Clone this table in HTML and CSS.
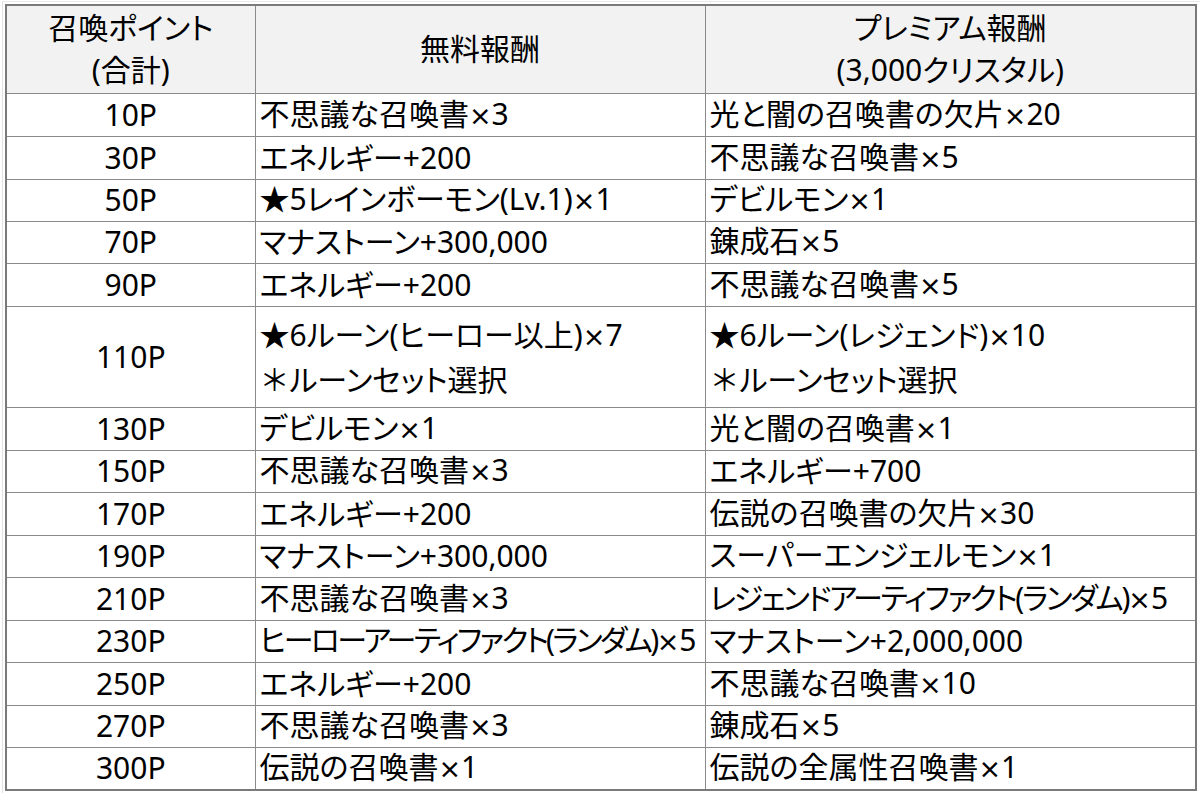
FILE: index.html
```html
<!DOCTYPE html>
<html lang="ja">
<head>
<meta charset="utf-8">
<title>召喚ポイント報酬</title>
<link rel="stylesheet" href="styles.css">
</head>
<body>
<div class="frame">
<table class="rewards">
  <colgroup>
    <col class="c-pt">
    <col class="c-free">
    <col class="c-prem">
  </colgroup>
  <thead>
    <tr class="head">
      <th>召喚ポイント<br>(合計)</th>
      <th>無料報酬</th>
      <th>プレミアム報酬<br>(3,000クリスタル)</th>
    </tr>
  </thead>
  <tbody>
    <tr class="r43"><td class="pt">10P</td><td>不思議な召喚書<span class="x">×</span>3</td><td>光と闇の召喚書の欠片<span class="x">×</span>20</td></tr>
    <tr class="r43"><td class="pt">30P</td><td>エネルギー+200</td><td>不思議な召喚書<span class="x">×</span>5</td></tr>
    <tr class="r42"><td class="pt">50P</td><td>★5レインボーモン(Lv.1)<span class="x">×</span>1</td><td>デビルモン<span class="x">×</span>1</td></tr>
    <tr class="r42"><td class="pt">70P</td><td>マナストーン+300,000</td><td>錬成石<span class="x">×</span>5</td></tr>
    <tr class="r43"><td class="pt">90P</td><td>エネルギー+200</td><td>不思議な召喚書<span class="x">×</span>5</td></tr>
    <tr class="r101"><td class="pt">110P</td><td>★6ルーン(ヒーロー以上)<span class="x">×</span>7<br><span class="mark">＊</span>ルーンセット選択</td><td>★6ルーン(レジェンド)<span class="x">×</span>10<br><span class="mark">＊</span>ルーンセット選択</td></tr>
    <tr class="r43"><td class="pt">130P</td><td>デビルモン<span class="x">×</span>1</td><td>光と闇の召喚書<span class="x">×</span>1</td></tr>
    <tr class="r42"><td class="pt">150P</td><td>不思議な召喚書<span class="x">×</span>3</td><td>エネルギー+700</td></tr>
    <tr class="r43"><td class="pt">170P</td><td>エネルギー+200</td><td>伝説の召喚書の欠片<span class="x">×</span>30</td></tr>
    <tr class="r42"><td class="pt">190P</td><td>マナストーン+300,000</td><td>スーパーエンジェルモン<span class="x">×</span>1</td></tr>
    <tr class="r43"><td class="pt">210P</td><td>不思議な召喚書<span class="x">×</span>3</td><td class="long">レジェンドアーティファクト(ランダム)<span class="x">×</span>5</td></tr>
    <tr class="r42"><td class="pt">230P</td><td class="long longer">ヒーローアーティファクト(ランダム)<span class="x">×</span>5</td><td>マナストーン+2,000,000</td></tr>
    <tr class="r43"><td class="pt">250P</td><td>エネルギー+200</td><td>不思議な召喚書<span class="x">×</span>10</td></tr>
    <tr class="r42"><td class="pt">270P</td><td>不思議な召喚書<span class="x">×</span>3</td><td>錬成石<span class="x">×</span>5</td></tr>
    <tr class="r43"><td class="pt">300P</td><td>伝説の召喚書<span class="x">×</span>1</td><td>伝説の全属性召喚書<span class="x">×</span>1</td></tr>
  </tbody>
</table>
</div>
</body>
</html>
```

FILE: styles.css
```css
html, body {
  margin: 0;
  padding: 0;
  background: #ffffff;
}

body {
  width: 1200px;
  height: 796px;
  overflow: hidden;
  font-family: "Noto Sans", "Noto Sans CJK JP", sans-serif;
  font-feature-settings: "palt" 1;
  color: #000000;
}

.frame {
  margin: 1px 0 0 2px;
  padding: 2px 0 0 2px;
  border-left: 1px solid #e2e2e2;
  border-top: 1px solid #e8e8e8;
  height: 792px;
  box-sizing: border-box;
}

.rewards {
  border-collapse: collapse;
  table-layout: fixed;
  width: 1190px;
  border: 2px solid #7a7a7a;
  font-size: 30px;
  line-height: 38px;
}

.c-pt { width: 249px; }
.c-free { width: 450px; }
.c-prem { width: 491px; }

.rewards th,
.rewards td {
  border: 1px solid #8a8a8a;
  padding: 0 0 0 4px;
  vertical-align: middle;
  white-space: nowrap;
  overflow: hidden;
}

.rewards th {
  background: #f2f2f2;
  font-weight: 400;
  text-align: center;
  padding: 0;
  line-height: 42px;
}

.head { height: 88px; }

.rewards td { text-align: left; }
.rewards td.pt { text-align: center; padding: 0; }
.rewards td.long { letter-spacing: -2.2px; }
.rewards td.longer { letter-spacing: -2.6px; }

.x {
  font-family: "DejaVu Sans", sans-serif;
  font-size: 27px;
  letter-spacing: 0;
}

.mark {
  font-feature-settings: "palt" 0;
}

.r42 { height: 42px; }
.r43 { height: 43px; }
.r101 { height: 101px; }
.r101 td { line-height: 43px; }
```
